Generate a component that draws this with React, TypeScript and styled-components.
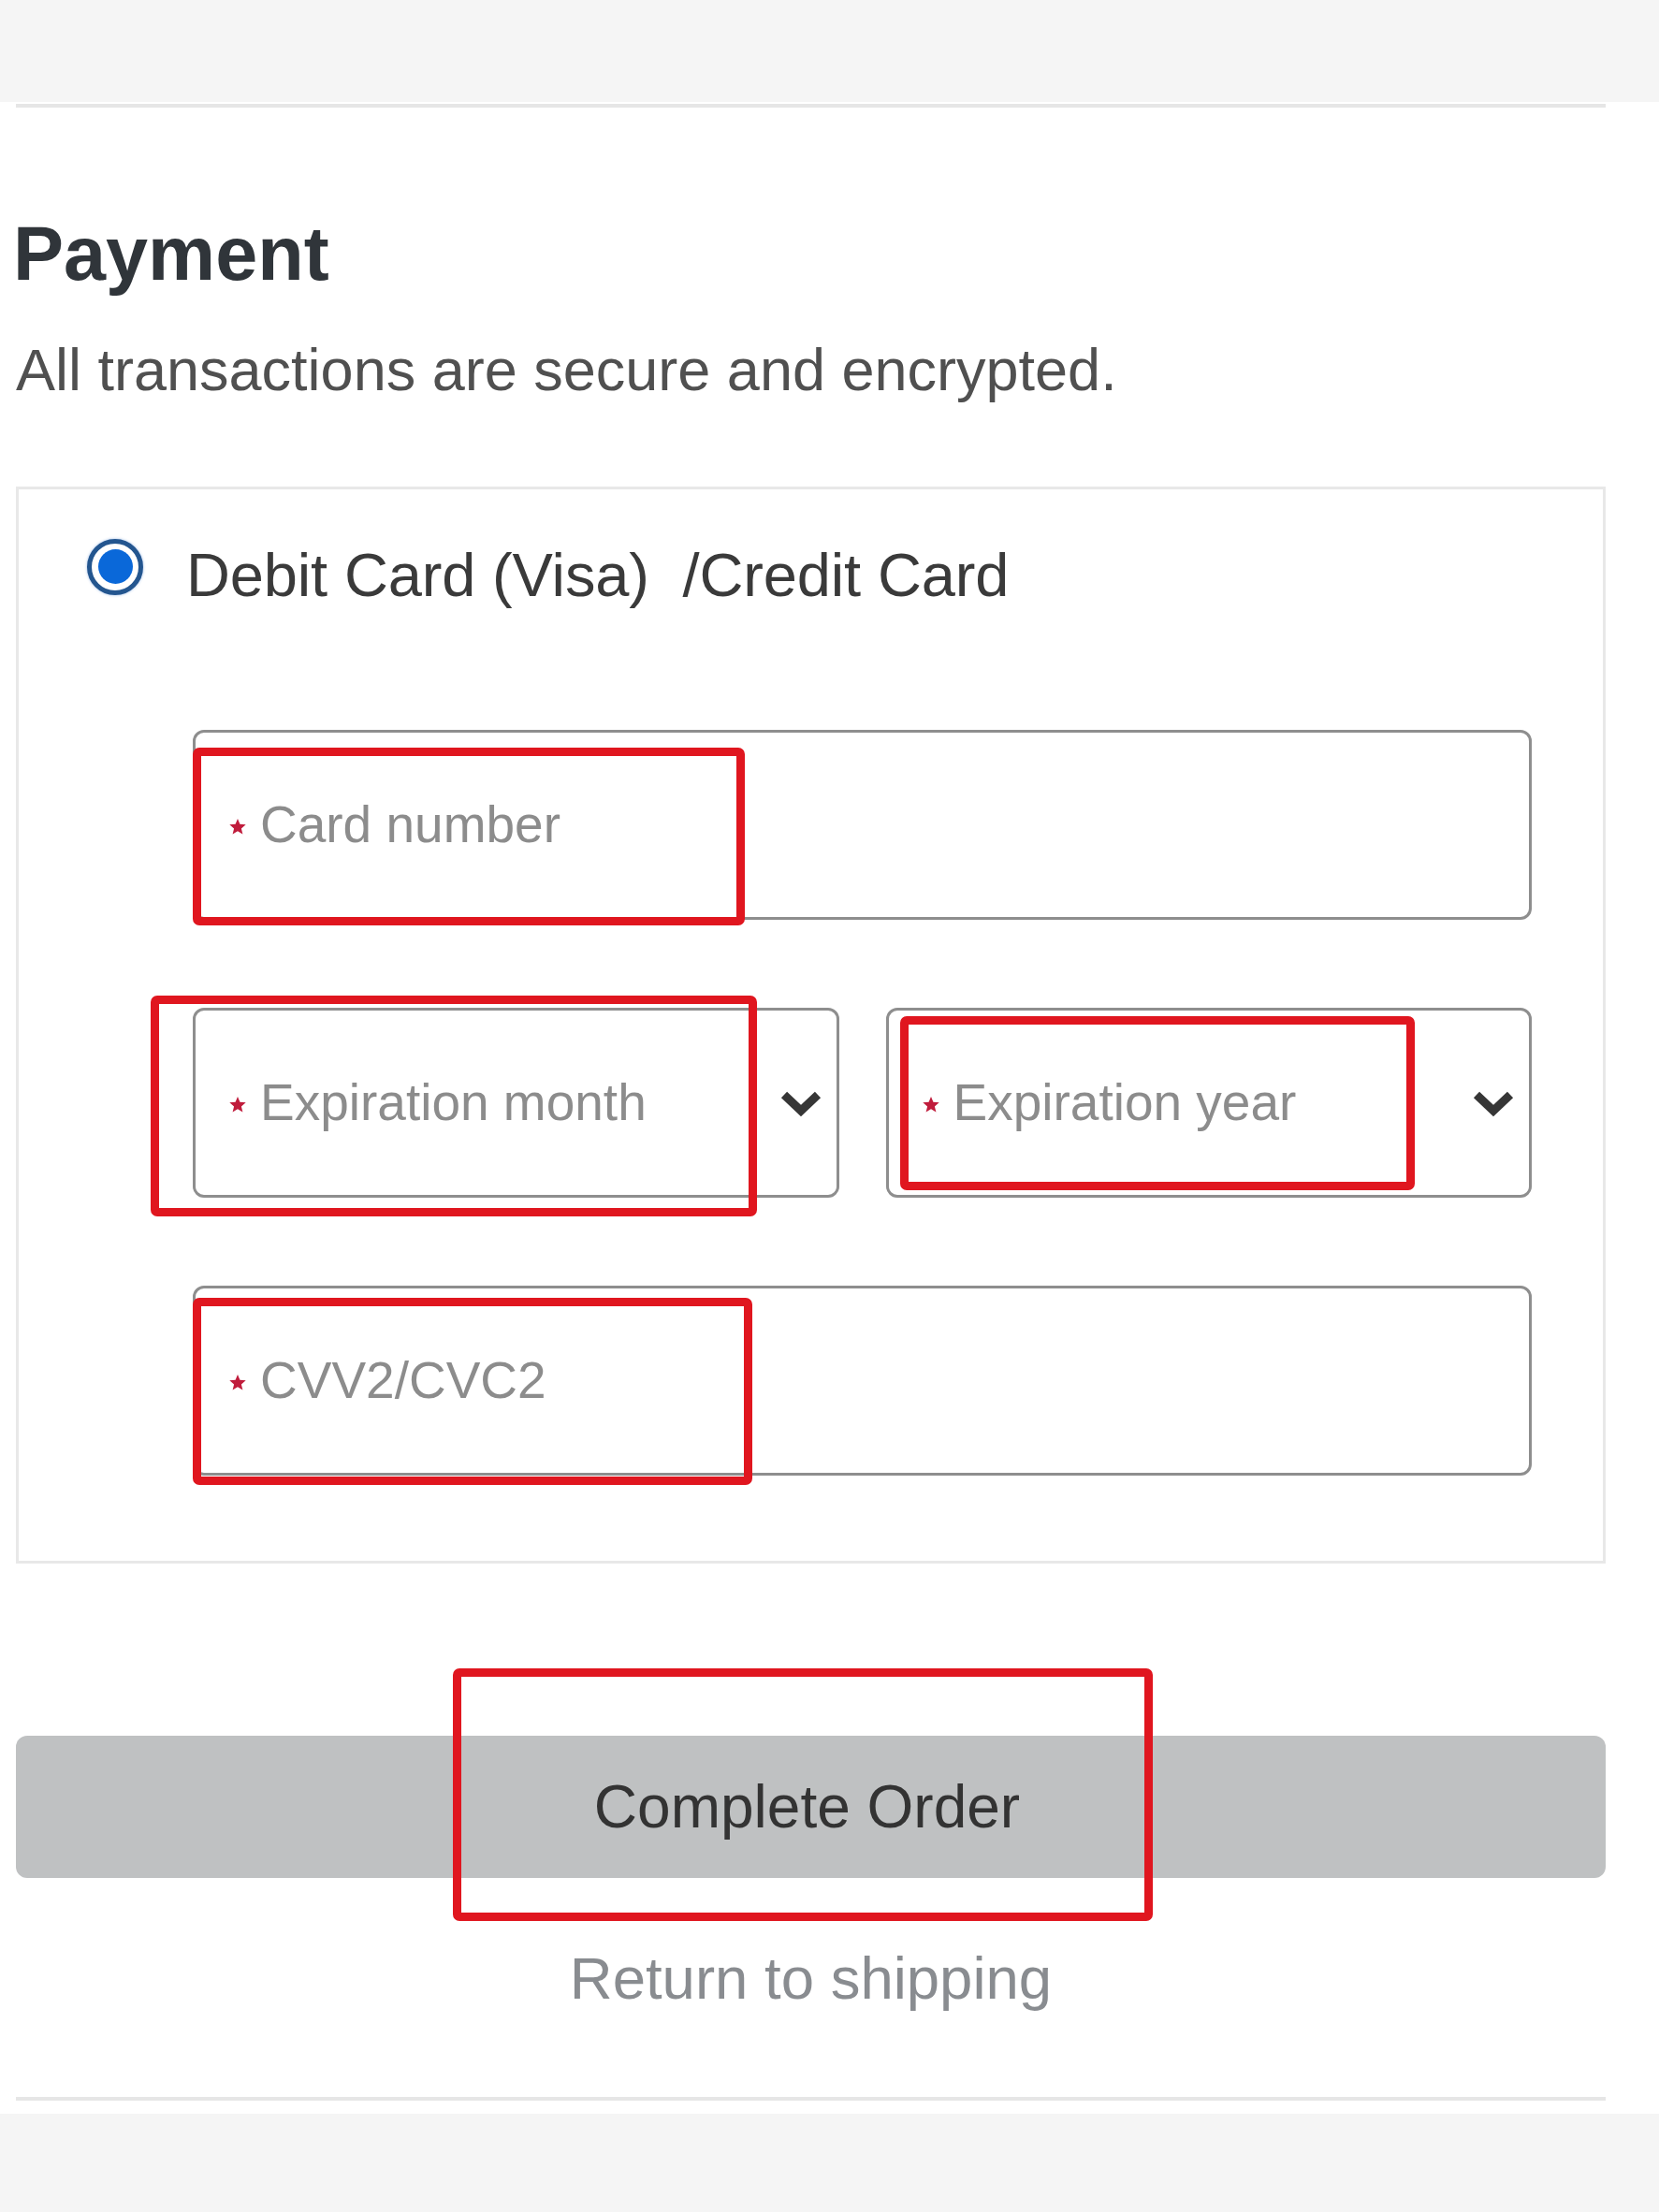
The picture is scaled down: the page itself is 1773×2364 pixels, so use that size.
import React from 'react';
import styled, { createGlobalStyle } from 'styled-components';

const GlobalStyle = createGlobalStyle`
  html, body {
    margin: 0;
    padding: 0;
    background: #ffffff;
  }
  body {
    font-family: 'Liberation Sans', Arial, Helvetica, sans-serif;
    color: #333333;
  }
  * {
    box-sizing: border-box;
  }
`;

const Page = styled.div`
  width: 1773px;
  min-height: 2364px;
  display: flex;
  flex-direction: column;
  background: #ffffff;
`;

const Band = styled.div<{ $height?: number; $gap?: number }>`
  background: #f5f5f5;
  height: ${p => (p.$height ? `${p.$height}px` : 'auto')};
  flex: ${p => (p.$height ? '0 0 auto' : '1')};
  margin-top: ${p => p.$gap ?? 0}px;
`;

const Content = styled.main`
  display: flex;
  flex-direction: column;
  padding: 0 57px 0 17px;
`;

const Rule = styled.hr<{ $top: number }>`
  margin: ${p => p.$top}px 0 0;
  border: none;
  height: 4px;
  background: #e6e6e6;
`;

const Heading = styled.h2`
  margin: 116px 0 0 -3px;
  font-size: 81px;
  line-height: 1;
  font-weight: 700;
  color: #30353a;
`;

const Subtitle = styled.p`
  margin: 52px 0 0;
  font-size: 63px;
  line-height: 1;
  color: #505050;
`;

const MethodCard = styled.section`
  margin-top: 93px;
  border: 3px solid #e8e8e8;
  padding: 59px 76px 91px 0;
  display: flex;
  flex-direction: column;
`;

const MethodRow = styled.label`
  display: flex;
  align-items: center;
  height: 64px;
  padding-left: 73px;
  gap: 46px;
`;

const Radio = styled.span`
  width: 60px;
  height: 60px;
  margin-bottom: 17px;
  border-radius: 50%;
  border: 5px solid #24568f;
  background: #ffffff;
  display: flex;
  align-items: center;
  justify-content: center;
  box-shadow: 0 0 3px rgba(30, 100, 200, 0.45);

  &::after {
    content: '';
    width: 37px;
    height: 37px;
    border-radius: 50%;
    background: #0a68d9;
  }
`;

const MethodLabel = styled.span`
  font-size: 65px;
  line-height: 1;
  color: #3a3a3a;
  white-space: pre;
  letter-spacing: -0.15px;
`;

const Fields = styled.div`
  margin-top: 134px;
  padding-left: 186px;
  display: flex;
  flex-direction: column;
  gap: 94px;
`;

const FieldPair = styled.div`
  display: grid;
  grid-template-columns: 1fr 1fr;
  gap: 50px;
`;

const Field = styled.div`
  position: relative;
  height: 203px;
  border: 3px solid #8e8e8e;
  border-radius: 12px;
  background: #ffffff;
  display: flex;
  align-items: center;
  padding: 0 16px 0 35px;
`;

const Placeholder = styled.span`
  flex: 1;
  display: flex;
  align-items: center;
  gap: 14px;
  font-size: 55px;
  line-height: 1;
  color: #8c8c8c;
`;

const Star = styled.svg`
  width: 20px;
  height: 20px;
  margin-top: 5px;
  flex: 0 0 auto;
`;

const Chevron = styled.svg`
  width: 44px;
  height: 30px;
  flex: 0 0 auto;
`;

const Highlight = styled.span<{ $x: number; $y: number; $w: number; $h: number }>`
  position: absolute;
  left: ${p => p.$x}px;
  top: ${p => p.$y}px;
  width: ${p => p.$w}px;
  height: ${p => p.$h}px;
  border: 9px solid #e0161f;
  border-radius: 7px;
  pointer-events: none;
`;

const SubmitButton = styled.button`
  position: relative;
  margin-top: 184px;
  height: 152px;
  border: none;
  border-radius: 12px;
  background: #bfc1c2;
  color: #333333;
  font-family: inherit;
  font-size: 64px;
  line-height: 1;
  padding: 0 8px 0 0;
  cursor: pointer;
`;

const ReturnLink = styled.a`
  margin-top: 76px;
  align-self: center;
  font-size: 63.5px;
  line-height: 1;
  color: #898c90;
  text-decoration: none;
  cursor: pointer;
`;

type Box = { x: number; y: number; w: number; h: number };

const RequiredStar = () => (
  <Star viewBox="0 0 20 20" aria-hidden>
    <path
      d="M10 1l2.4 5.8 6.3.5-4.8 4.1 1.5 6.1L10 14.2l-5.4 3.3 1.5-6.1-4.8-4.1 6.3-.5z"
      fill="#c01c3c"
    />
  </Star>
);

const DownArrow = () => (
  <Chevron viewBox="0 0 44 30" aria-hidden>
    <polyline
      points="4,6 22,23 40,6"
      fill="none"
      stroke="#363636"
      strokeWidth="9"
      strokeLinejoin="miter"
    />
  </Chevron>
);

const InputField: React.FC<{ label: string; select?: boolean; mark?: Box }> = ({ label, select, mark }) => (
  <Field>
    <Placeholder>
      <RequiredStar />
      {label}
    </Placeholder>
    {select && <DownArrow />}
    {mark && <Highlight $x={mark.x} $y={mark.y} $w={mark.w} $h={mark.h} />}
  </Field>
);

export default function App() {
  return (
    <>
      <GlobalStyle />
      <Page>
        <Band $height={109} />
        <Content>
          <Rule $top={2} />
          <Heading>Payment</Heading>
          <Subtitle>All transactions are secure and encrypted.</Subtitle>

          <MethodCard>
            <MethodRow>
              <Radio />
              <MethodLabel>{'Debit Card (Visa)  /Credit Card'}</MethodLabel>
            </MethodRow>

            <Fields>
              <InputField label="Card number" mark={{ x: -3, y: 16, w: 590, h: 190 }} />
              <FieldPair>
                <InputField label="Expiration month" select mark={{ x: -48, y: -16, w: 648, h: 236 }} />
                <InputField label="Expiration year" select mark={{ x: 12, y: 6, w: 550, h: 186 }} />
              </FieldPair>
              <InputField label="CVV2/CVC2" mark={{ x: -3, y: 10, w: 598, h: 200 }} />
            </Fields>
          </MethodCard>

          <SubmitButton type="button">
            Complete Order
            <Highlight $x={467} $y={-72} $w={748} $h={270} />
          </SubmitButton>

          <ReturnLink>Return to shipping</ReturnLink>

          <Rule $top={94} />
        </Content>
        <Band $gap={14} />
      </Page>
    </>
  );
}
